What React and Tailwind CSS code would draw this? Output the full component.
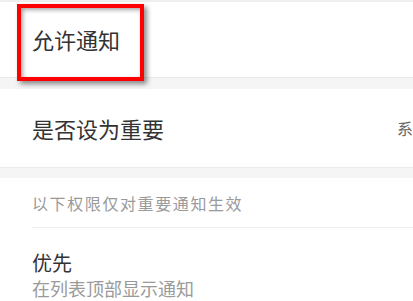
export default function App() {
  return (
    <div
      className="relative w-[413px] h-[301px] overflow-hidden bg-white"
      style={{ fontFamily: '"Noto Sans CJK SC", "Noto Sans", sans-serif' }}
    >
      {/* top hairline */}
      <div className="h-[2px] bg-[#efefef]" />

      {/* 允许通知 */}
      <div className="h-[75px] flex items-center pl-8 text-[22px] text-[#333]">
        允许通知
      </div>

      <div className="h-3 bg-[#f5f5f5] border-t border-[#ebebeb]" />

      {/* 是否设为重要 */}
      <div className="h-[78px] flex items-center pl-8 text-[22px] text-[#333]">
        <span className="w-[365px] shrink-0">是否设为重要</span>
        <span className="shrink-0 whitespace-nowrap text-[16px] text-[#666]">系</span>
      </div>

      <div className="h-[11px] bg-[#f5f5f5] border-t border-[#ebebeb]" />

      {/* permissions */}
      <div className="pl-8">
        <div className="h-[50px] flex items-center border-b border-[#eeeeee] text-[16px] tracking-[1.6px] text-[#9a9a9a]">
          以下权限仅对重要通知生效
        </div>
        <div className="pt-[22px] flex flex-col">
          <span className="text-[20px] leading-[26px] text-[#333]">优先</span>
          <span className="text-[18px] leading-[24px] text-[#9a9a9a]">在列表顶部显示通知</span>
        </div>
      </div>

      {/* annotation box */}
      <div className="absolute left-[17px] top-[4px] w-[127px] h-[77px] border-4 border-[#ff0000] shadow-[3px_3px_5px_rgba(0,0,0,0.45),inset_2px_2px_4px_rgba(0,0,0,0.35)]" />
    </div>
  );
}
